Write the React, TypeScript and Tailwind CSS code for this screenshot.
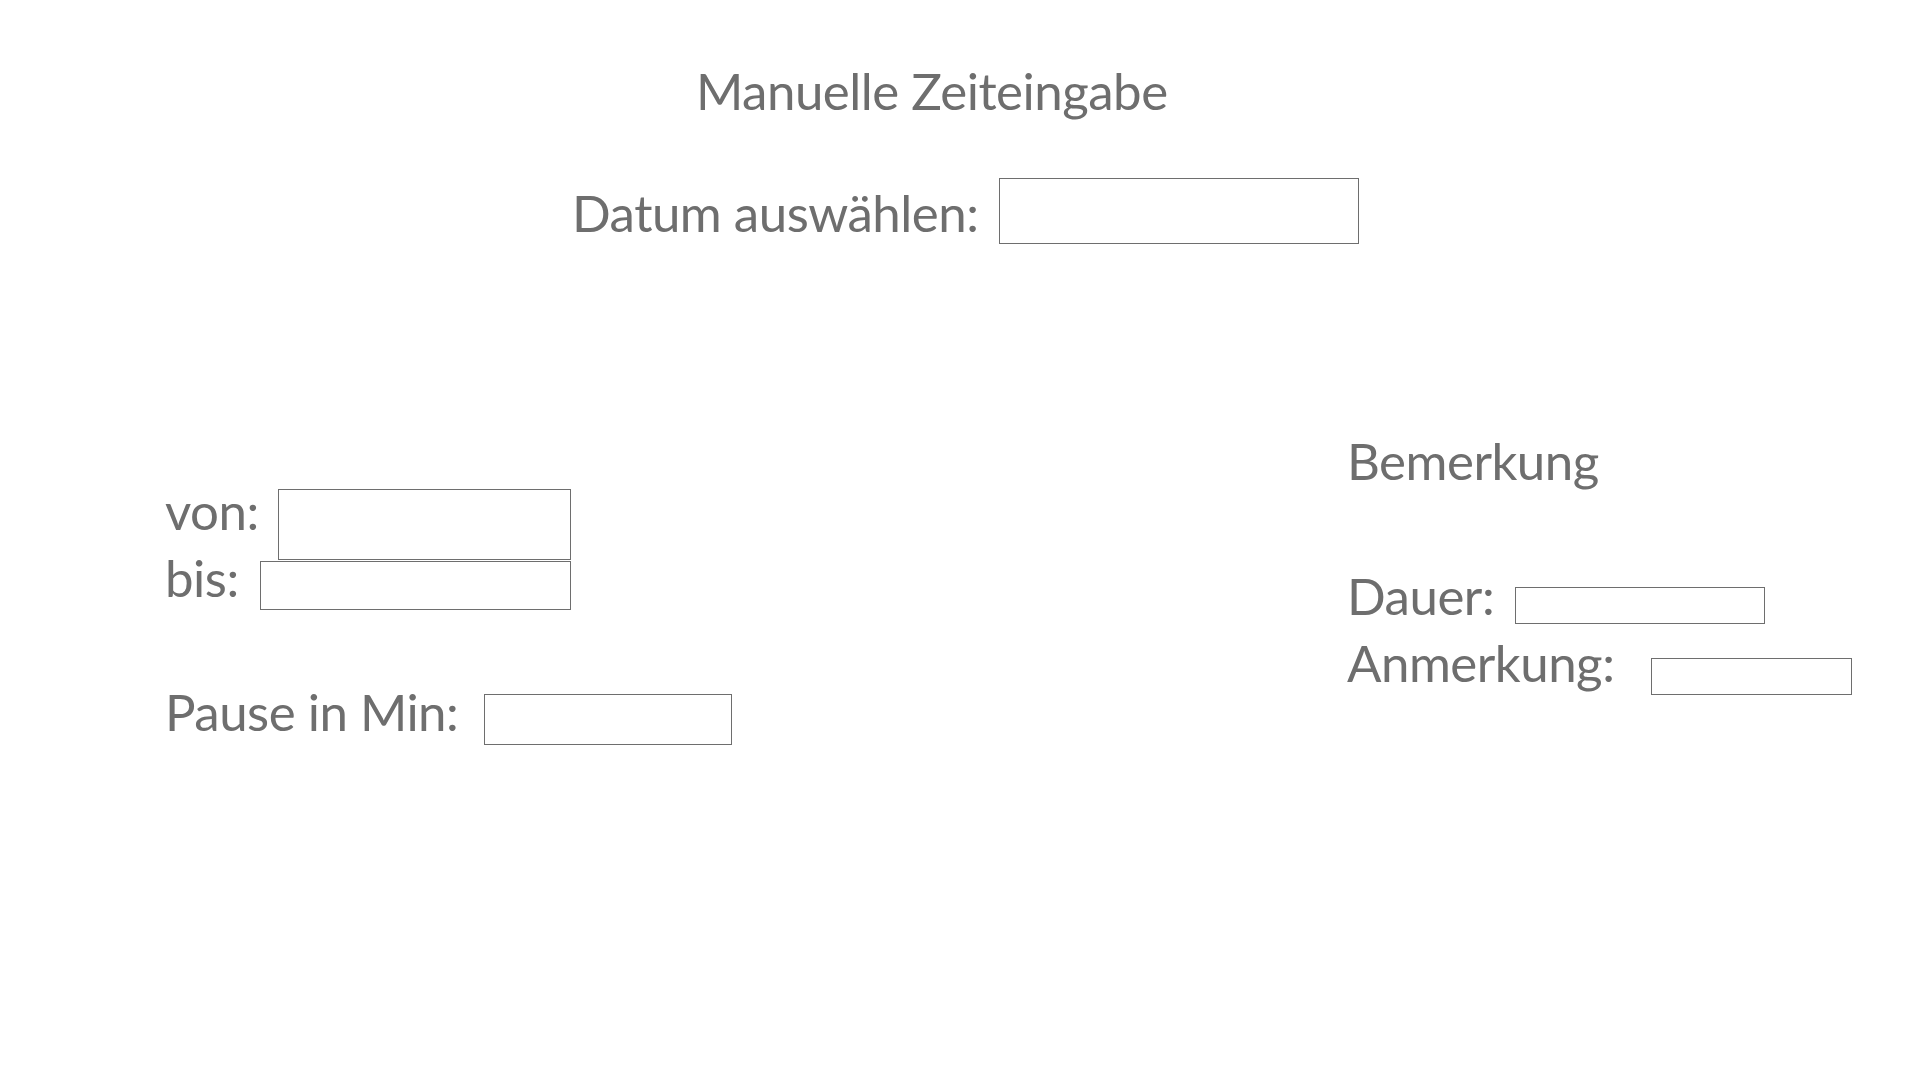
import React from "react";

const Field = ({ className }: { className: string }) => (
    <input type="text" className={`shrink-0 border border-[#6e6e6e] bg-white outline-none ${className}`} />
);

const App: React.FC = () => {
    return (
        <div className="w-full h-screen bg-white text-[#6e6e6e] text-[51px] leading-[62px] tracking-[-0.5px] font-['Lato','Liberation_Sans',sans-serif] overflow-hidden">
            {/* header */}
            <div className="pt-[60px] pl-[696px] whitespace-nowrap">Manuelle Zeiteingabe</div>

            <div className="mt-[56px] ml-[572px] flex items-start h-[66px]">
                <div className="w-[427px] mt-[4px] whitespace-nowrap">Datum auswählen:</div>
                <Field className="w-[360px] h-[66px]" />
            </div>

            <div className="mt-[186px] flex">
                {/* times */}
                <div className="ml-[165px] w-[1182px] pt-[50px]">
                    <div className="flex items-start h-[67px]">
                        <div className="w-[113px] whitespace-nowrap">von:</div>
                        <Field className="mt-[9px] w-[293px] h-[71px]" />
                    </div>
                    <div className="flex items-start h-[134px]">
                        <div className="w-[95px] whitespace-nowrap">bis:</div>
                        <Field className="mt-[14px] w-[311px] h-[49px]" />
                    </div>
                    <div className="flex items-start">
                        <div className="w-[319px] whitespace-nowrap">Pause in Min:</div>
                        <Field className="mt-[13px] w-[248px] h-[51px]" />
                    </div>
                </div>

                {/* remarks */}
                <div>
                    <div className="whitespace-nowrap">Bemerkung</div>
                    <div className="mt-[73px] flex items-start h-[67px]">
                        <div className="w-[168px] whitespace-nowrap">Dauer:</div>
                        <Field className="mt-[22px] w-[250px] h-[37px]" />
                    </div>
                    <div className="flex items-start">
                        <div className="w-[304px] whitespace-nowrap">Anmerkung:</div>
                        <Field className="mt-[26px] w-[201px] h-[37px]" />
                    </div>
                </div>
            </div>
        </div>
    );
};

export default App;
